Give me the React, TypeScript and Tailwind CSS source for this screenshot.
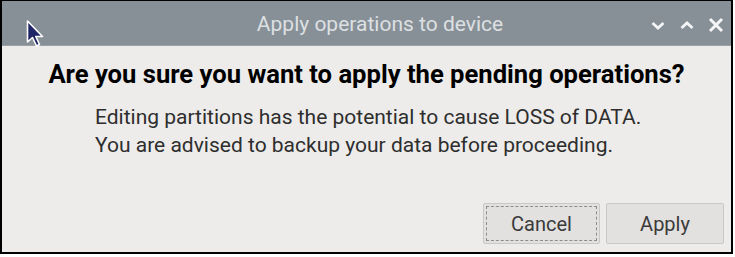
import { useState } from "react";

const Cursor = () => (
  <svg width="22" height="30" viewBox="0 0 22 30" className="absolute left-[23px] top-[18px]">
    <path
      d="M2.5 2 L2.5 23 L7.5 18.5 L11.5 27 L14.5 25.5 L10.8 17.5 L17.5 17.5 Z"
      fill="#1f2466"
      stroke="#ffffff"
      strokeWidth="1.6"
      strokeLinejoin="round"
    />
  </svg>
);

const TitleButtons = () => (
  <div className="flex items-center gap-[9px] pr-[5px] pt-[3px]">
    <svg width="20" height="20" viewBox="0 0 20 20">
      <path d="M4.5 8 L10 13 L15.5 8" fill="none" stroke="#f4f5f6" strokeWidth="2.8" />
    </svg>
    <svg width="20" height="20" viewBox="0 0 20 20">
      <path d="M4.5 13 L10 8 L15.5 13" fill="none" stroke="#f4f5f6" strokeWidth="2.8" />
    </svg>
    <svg width="20" height="20" viewBox="0 0 20 20">
      <path d="M4 4 L16 16 M16 4 L4 16" fill="none" stroke="#f4f5f6" strokeWidth="3" />
    </svg>
  </div>
);

const App = () => {
  const [focus] = useState<string>("cancel");

  return (
    <div className="w-[735px] h-[257px] bg-white" style={{ fontFamily: "Roboto, 'Liberation Sans', sans-serif" }}>
      <div className="relative w-[733px] h-[254px] border-2 border-t border-black bg-[#edecea] flex flex-col">
        {/* title bar */}
        <div className="h-[45px] bg-[#878f97] flex items-center border-b border-[#9ba1a7]">
          <div className="flex-1 text-center text-[21px] text-[#dde0e2] pl-[110px] pt-[4px]">
            Apply operations to device
          </div>
          <TitleButtons />
        </div>
        <Cursor />

        {/* content */}
        <div className="flex-1 flex flex-col">
          <div className="text-center font-bold text-[25.6px] text-black mt-[13px] leading-[30px]">
            Are you sure you want to apply the pending operations?
          </div>
          <div className="pl-[93px] mt-[14px] text-[21px] text-[#2e2e2e] leading-[28px]">
            <div>Editing partitions has the potential to cause LOSS of DATA.</div>
            <div>You are advised to backup your data before proceeding.</div>
          </div>
        </div>

        {/* buttons */}
        <div className="flex justify-end gap-[6px] pr-[7px] pb-[8px]">
          <button className="w-[117px] h-[41px] bg-[#e2e1df] border border-[#c9c8c6] rounded-[2px] p-[2px] text-[20px] text-[#3a3a3a]">
            <div
              className={
                focus === "cancel"
                  ? "w-full h-full border border-dashed border-[#8d8c8a] flex items-center justify-center"
                  : "w-full h-full flex items-center justify-center"
              }
            >
              Cancel
            </div>
          </button>
          <button className="w-[118px] h-[41px] bg-[#e2e1df] border border-[#c9c8c6] rounded-[2px] text-[20px] text-[#3a3a3a] flex items-center justify-center">
            Apply
          </button>
        </div>
      </div>
    </div>
  );
};

export default App;
